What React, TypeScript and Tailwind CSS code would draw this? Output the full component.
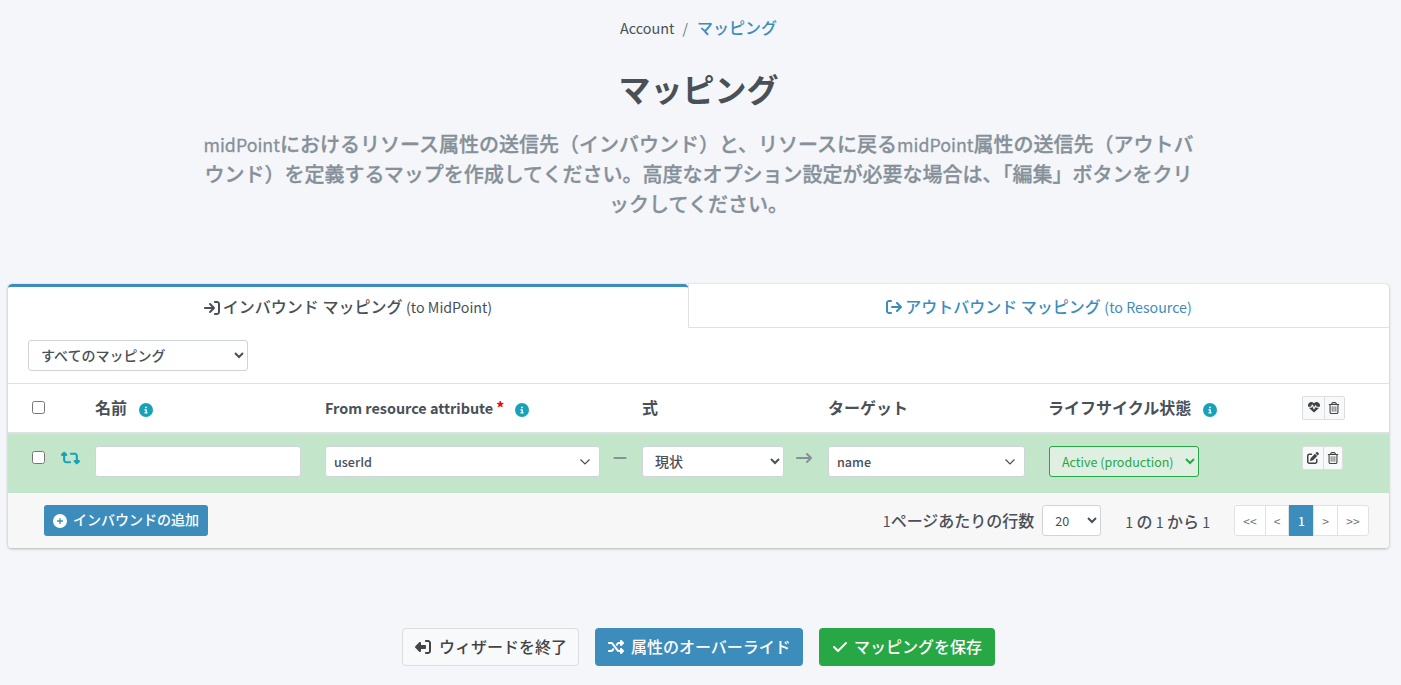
import type { ReactNode } from "react";
import {
  FaArrowRightFromBracket,
  FaArrowRightLong,
  FaArrowRightToBracket,
  FaCheck,
  FaCircleInfo,
  FaCirclePlus,
  FaHeartPulse,
  FaMinus,
  FaPenToSquare,
  FaRegTrashCan,
  FaRetweet,
  FaRightFromBracket,
  FaShuffle,
} from "react-icons/fa6";

const COLUMNS =
  "grid grid-cols-[29px_34px_230px_288px_29px_154px_32px_221px_253px_1fr] pl-6";

function Latin({ children }: { children: ReactNode }) {
  return <span className="text-[0.89em] font-normal">{children}</span>;
}

function Info() {
  return <FaCircleInfo className="mt-[5px] size-3.5 text-[#17a2b8]" />;
}

function ComboBox({ value, className }: { value: string; className: string }) {
  return (
    <div
      className={`flex h-[31px] items-center justify-between rounded-[3px] border border-[#ced4da] bg-white pr-2 pl-2 text-[#495057] ${className}`}
    >
      <span className="pt-px text-[12.600px] leading-none">{value}</span>
      <svg viewBox="0 0 12 12" className="size-3" fill="none" stroke="#495057" strokeWidth="1.2">
        <path d="M1.500 3.500 6 8l4.500-4.500" />
      </svg>
    </div>
  );
}

function Page({ label, active, className }: { label: string; active?: boolean; className: string }) {
  return (
    <span
      className={`flex items-center justify-center text-[12px] ${
        active
          ? "bg-[#3c8dbc] font-medium text-white"
          : "border border-[#dee2e6] bg-white font-normal text-[#6c757d]"
      } ${className}`}
    >
      {label}
    </span>
  );
}

export default function App() {
  return (
    <div className="h-[685px] overflow-hidden bg-[#f4f6f9] pr-3 pl-2 font-['Noto_Sans_CJK_JP',sans-serif] text-[16px] font-medium text-[#495057]">
      <nav className="flex h-14 items-center justify-center leading-none">
        <span className="pt-px text-[14.400px] font-normal">Account</span>
        <span className="mr-[9px] ml-2 text-[14px] font-normal text-[#6c757d]">/</span>
        <a className="pb-0.5 text-[#3c8dbc]">マッピング</a>
      </nav>
      <h1 className="flex h-[66px] items-center justify-center pb-[3px] text-[32px] leading-none font-bold">
        マッピング
      </h1>
      <p className="mt-[7px] text-center text-[20px] leading-[30px] whitespace-nowrap text-[#869099] [-webkit-text-stroke:0.3px_#869099]">
        <Latin>midPoint</Latin>におけるリソース属性の送信先（インバウンド）と、リソースに戻る<Latin>midPoint</Latin>属性の送信先（アウトバ
        <br />
        ウンド）を定義するマップを作成してください。高度なオプション設定が必要な場合は、「編集」ボタンをクリ
        <br />
        ックしてください。
      </p>

      <section className="mt-[65px] h-[264px] overflow-hidden rounded-[4px] bg-white shadow-[0_0_1px_rgba(0,0,0,.2),0_1px_3px_rgba(0,0,0,.25)]">
        <div className="flex h-11">
          <div className="flex w-[680px] items-center justify-center rounded-t-[4px] border-t-[3px] border-[#3c8dbc] leading-none">
            <FaArrowRightToBracket className="mr-[3px] size-4" />
            <span className="pb-0.5">インバウンド マッピング <Latin>(to MidPoint)</Latin></span>
          </div>
          <div className="flex flex-1 items-center justify-center border-b border-l border-[#dee2e6] pt-[3px] leading-none text-[#3c8dbc]">
            <FaArrowRightFromBracket className="mr-[3px] size-4" />
            <span className="pb-0.5">アウトバウンド マッピング <Latin>(to Resource)</Latin></span>
          </div>
        </div>

        <div className="h-[55px] pt-3 pl-5">
          <select className="h-[31px] w-[220px] rounded-[3px] border border-[#ced4da] bg-white pb-0.5 pl-2 text-[14px]">
            <option>すべてのマッピング</option>
          </select>
        </div>

        <div className={`${COLUMNS} h-[51px] items-center border-t border-b-2 border-[#dee2e6] pb-0.5 font-bold leading-none`}>
          <input type="checkbox" className="size-[13px]" />
          <span />
          <div className="flex items-center gap-3">名前<Info /></div>
          <div className="flex items-center">
            <span className="pt-0.5 text-[14.400px]">From resource attribute</span>
            <span className="ml-[3px] text-[16px] text-[#ff0000]">*</span>
            <span className="ml-[11px]"><Info /></span>
          </div>
          <span />
          <div>式</div>
          <span />
          <div>ターゲット</div>
          <div className="-ml-px flex items-center gap-3">ライフサイクル状態<Info /></div>
          <div className="mt-0.5 flex h-6 w-[43px] rounded-[2px] border border-[#ddd] bg-[#f8f9fa] text-[12px] text-[#444]">
            <span className="flex w-[22px] items-center justify-center border-r border-[#ddd] pb-0.5"><FaHeartPulse /></span>
            <span className="flex flex-1 items-center justify-center pr-px pb-px"><FaRegTrashCan /></span>
          </div>
        </div>

        <div className={`${COLUMNS} h-[59px] items-start bg-[#c3e6cb] pt-3`}>
          <input type="checkbox" className="mt-[5px] size-[13px]" />
          <FaRetweet className="mt-0.5 h-5 w-[19px] text-[#17a2b8]" />
          <input type="text" className="h-[31px] w-[206px] rounded-[3px] border border-[#ced4da] bg-white" />
          <ComboBox value="userId" className="w-[275px]" />
          <FaMinus className="-ml-px mt-1 size-4 text-[#869099]" />
          <select className="h-[31px] w-[142px] rounded-[3px] border border-[#ced4da] bg-white pb-0.5 pl-2 text-[14px]">
            <option>現状</option>
          </select>
          <FaArrowRightLong className="mt-1 size-4 text-[#869099]" />
          <ComboBox value="name" className="w-[197px]" />
          <select className="h-[31px] w-[150px] rounded-[3px] border border-[#28a745] bg-[#dff0e3] pl-2 text-[12.500px] font-normal text-[#28a745]">
            <option>Active (production)</option>
          </select>
          <div className="flex h-6 w-[41px] rounded-[2px] border border-[#ddd] bg-[#f8f9fa] text-[12px] text-[#444]">
            <span className="flex w-[21px] items-center justify-center border-r border-[#ddd]"><FaPenToSquare /></span>
            <span className="flex flex-1 items-center justify-center pb-px"><FaRegTrashCan /></span>
          </div>
        </div>

        <div className="flex h-[55px] items-center bg-[#f7f7f7] pr-5 pl-9 leading-none">
          <button className="flex h-[31px] w-[164px] items-center rounded-[3px] bg-[#3c8dbc] pl-[9px] text-[14px] text-white">
            <FaCirclePlus className="mr-1.5 size-3.5" />
            <span className="pb-[3px]">インバウンドの追加</span>
          </button>
          <span className="ml-auto"><Latin>1</Latin>ページあたりの行数</span>
          <select className="ml-2 h-[31px] w-[59px] rounded-[3px] border border-[#ced4da] bg-white pl-2 text-[12.600px] font-normal">
            <option>20</option>
          </select>
          <span className="mr-6 ml-6 pt-0.5 tracking-[-0.15px]"><Latin>1</Latin> の <Latin>1</Latin> から <Latin>1</Latin></span>
          <div className="flex h-[31px]">
            <Page label="<<" className="w-8 rounded-l-[3px]" />
            <Page label="<" className="-ml-px w-6" />
            <Page label="1" active className="w-[25px]" />
            <Page label=">" className="-ml-px w-[25px]" />
            <Page label=">>" className="-ml-px w-8 rounded-r-[3px]" />
          </div>
        </div>
      </section>

      <div className="mt-20 flex justify-center gap-4 leading-none">
        <button className="flex h-[38px] w-[177px] items-center rounded-[4px] border border-[#ddd] bg-[#f8f9fa] pl-3 text-[#444]">
          <FaRightFromBracket className="mr-2 size-4 -scale-x-100" />
          <span className="pb-0.5">ウィザードを終了</span>
        </button>
        <button className="flex h-[38px] w-[208px] items-center rounded-[4px] bg-[#3c8dbc] pl-[13px] text-white">
          <FaShuffle className="mr-[7px] size-4" />
          <span className="pb-0.5">属性のオーバーライド</span>
        </button>
        <button className="flex h-[38px] w-[176px] items-center rounded-[4px] bg-[#28a745] pl-[13px] text-white">
          <FaCheck className="mr-1.5 size-4" />
          <span className="pb-0.5">マッピングを保存</span>
        </button>
      </div>
    </div>
  );
}
